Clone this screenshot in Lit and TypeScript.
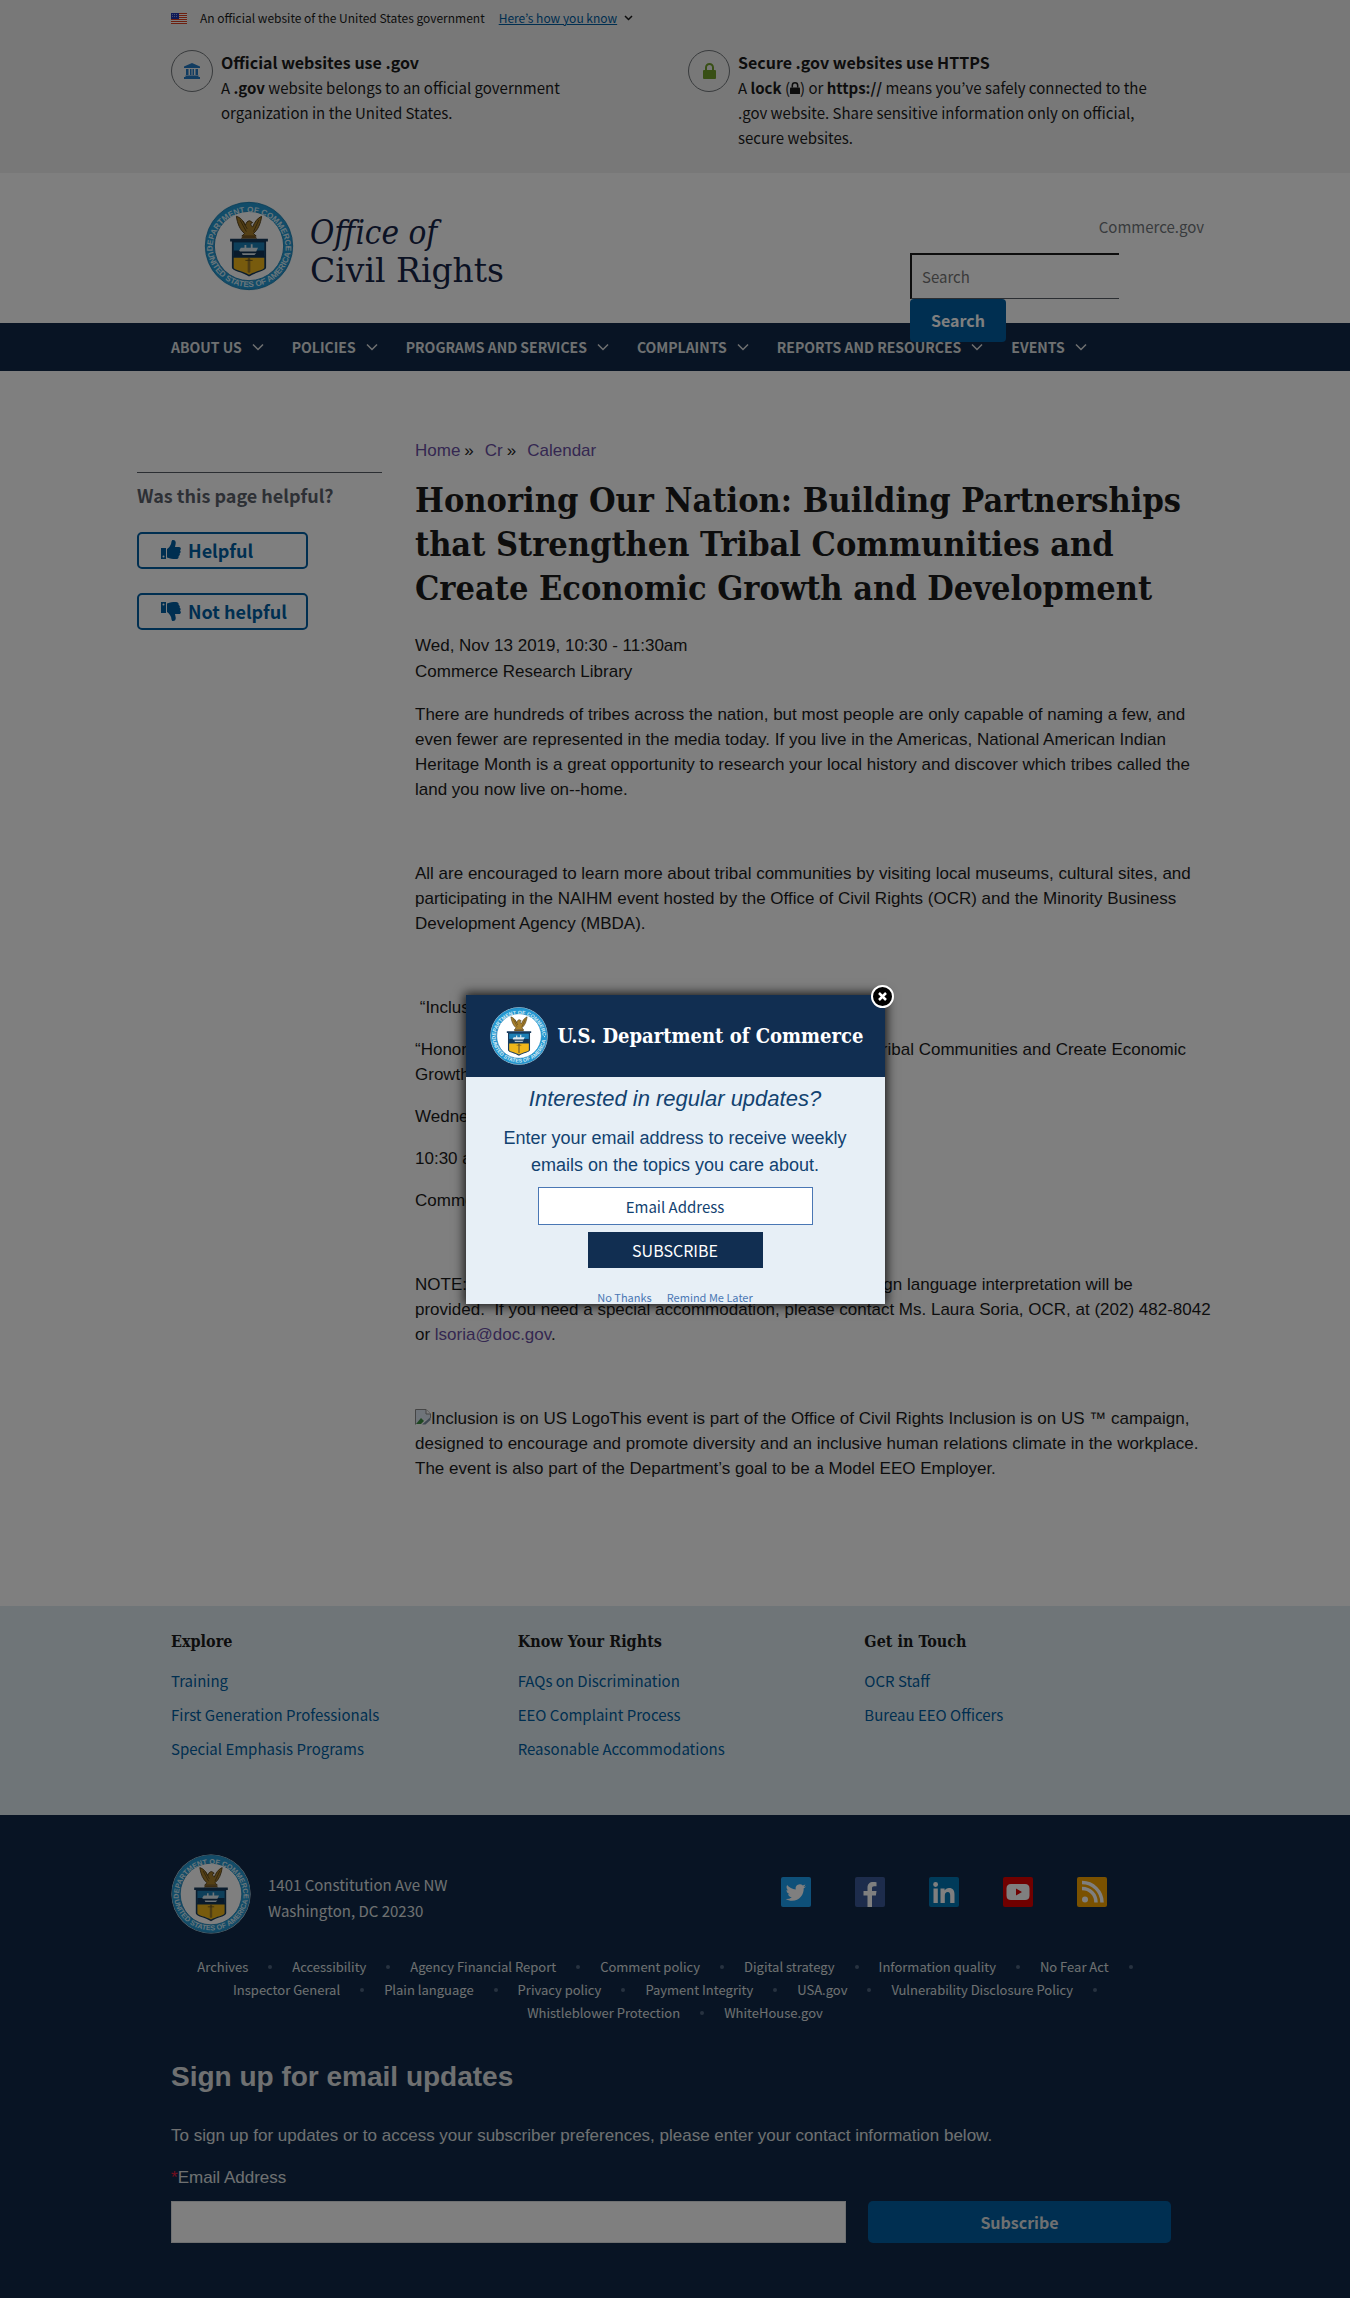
import { LitElement, html, css, svg } from "lit";
import { customElement } from "lit/decorators.js";

const base = css`
  *,
  *::before,
  *::after {
    box-sizing: border-box;
  }
  :host {
    --sans: "Noto Sans CJK KR", "Open Sans", sans-serif;
    --serif: "DejaVu Serif Condensed", "DejaVu Serif", "Liberation Serif", serif;
    --arial: "Liberation Sans", Arial, sans-serif;
    --navy: #112949;
    --blue: #005ea2;
  }
  a {
    text-decoration: none;
    color: inherit;
  }
  button,
  input {
    font: inherit;
    margin: 0;
  }
  button {
    border: 0;
    cursor: pointer;
  }
  ul {
    list-style: none;
    margin: 0;
    padding: 0;
  }
  svg {
    display: block;
    flex: none;
  }
`;

@customElement("commerce-seal")
export class CommerceSeal extends LitElement {
  static styles = css`
    :host {
      display: block;
      flex: none;
    }
    svg {
      display: block;
      width: 100%;
      height: auto;
    }
    .lettering {
      font: bold 9px "Liberation Sans", sans-serif;
      fill: #d4ebf5;
    }
  `;

  render() {
    return html`<svg viewBox="0 0 100 100" role="img" aria-label="Department of Commerce seal">
      <defs>
        <path id="top" d="M9.5 53A40.5 40.5 0 1 1 90.5 53" />
        <path id="bottom" d="M3.5 54A46.8 46.8 0 0 0 96.5 54" />
      </defs>
      <circle cx="50" cy="50" r="49.5" fill="#e8f2f6" />
      <circle cx="50" cy="50" r="48.5" fill="#2598d2" stroke="#1b7fb2" stroke-width="1" />
      <circle cx="50" cy="50" r="38.5" fill="#fff" stroke="#1b7fb2" stroke-width="1" />
      <text class="lettering" text-anchor="middle">
        <textPath href="#top" startOffset="50%">DEPARTMENT OF COMMERCE</textPath>
      </text>
      <text class="lettering" text-anchor="middle">
        <textPath href="#bottom" startOffset="50%">UNITED STATES OF AMERICA</textPath>
      </text>
      <path d="M36 17c4 1 8 5 10 10 1-3 2-5 5-5l3 2-2 1c0 2 1 3 2 4 2-5 5-10 10-12-1 8-4 15-9 19l3 3H42l3-3c-5-4-8-11-9-19z" fill="#a9812c" stroke="#4b3715" stroke-width="1" />
      <path d="M40 21l7 13M43 22l5 9M61 21l-6 13" stroke="#5a4317" stroke-width="1" fill="none" />
      <path d="M43 39h14l2 3H41z" fill="#7a5b25" />
      <path d="M29 42h42v3h-2v29c0 4-12 5-19 10-7-5-19-6-19-10V45h-2z" fill="#173a5c" />
      <path d="M33 46h34v15H33z" fill="#1c7fb5" />
      <path d="M33 55h34v7H33z" fill="#123556" />
      <path d="M39 55l2-3h4v-3h2v3h5v-4h2v4h6l-2 4H40zM42 58h16l-2 2H43z" fill="#dfeaf0" />
      <path d="M33 63h34v11c0 3-11 4-17 8-6-4-17-5-17-8z" fill="#f0b71a" />
      <path d="M48.500 64h3v15l-1.500 1-1.500-1z" fill="#9c7a2a" />
      <path d="M50 65v-2M46 66h8" stroke="#6b531d" stroke-width="1" />
      <circle cx="6" cy="51" r="1" fill="#e6f3f8" />
      <circle cx="94" cy="51" r="1" fill="#e6f3f8" />
    </svg>`;
  }
}

@customElement("gov-banner")
export class GovBanner extends LitElement {
  static styles = [
    base,
    css`
      :host {
        display: block;
        background: #f0f0f0;
        color: #1b1b1b;
        font-family: var(--sans);
        font-size: 15px;
        line-height: 25px;
      }
      .inner {
        max-width: 1040px;
        margin: 0 auto;
        padding: 8px 16px 23px;
      }
      .bar {
        display: flex;
        align-items: center;
        font-size: 12px;
        line-height: 20px;
        height: 20px;
      }
      .flag {
        width: 16px;
        margin-right: 13px;
      }
      .how {
        display: flex;
        align-items: center;
        gap: 7px;
        margin-left: 14px;
        padding: 0;
        background: none;
        color: var(--blue);
      }
      .how span {
        text-decoration: underline;
      }
      .tips {
        display: grid;
        grid-template-columns: 1fr 1fr;
        gap: 26px;
        padding-top: 22px;
      }
      .tip {
        display: flex;
        gap: 8px;
        align-items: flex-start;
      }
      .round {
        flex: none;
        width: 42px;
        height: 42px;
        border-radius: 50%;
        border: 1px solid #71767a;
        display: grid;
        place-items: center;
      }
      .tip p {
        margin: 0;
      }
      .lead {
        font-size: 16px;
      }
      .lock {
        display: inline-block;
      }
    `,
  ];

  private lock(color: string, w: number, cls = "") {
    return html`<svg class=${cls} width=${w} viewBox="0 0 13 16" aria-hidden="true">
      <path d="M3 7V4.500a3.500 3.500 0 0 1 7 0V7" fill="none" stroke=${color} stroke-width="2" />
      <rect y="7" width="13" height="9" rx="1" fill=${color} />
    </svg>`;
  }

  render() {
    return html`<div class="inner">
      <div class="bar">
        <svg class="flag" viewBox="0 0 16 11" aria-hidden="true">
          <rect width="16" height="11" fill="#fff" />
          <path d="M0 .5h16M0 2.500h16M0 4.500h16M0 6.500h16M0 8.500h16M0 10.500h16" stroke="#db3e1f" />
          <rect width="8" height="6" fill="#1e33b1" />
          <path d="M1 1.500h6M1 3.500h6" stroke="#8f9ce0" stroke-dasharray="1 1" />
        </svg>
        <span>An official website of the United States government</span>
        <button class="how" type="button">
          <span>Here’s how you know</span>
          <svg width="9" height="6" viewBox="0 0 9 6" aria-hidden="true">
            <path d="M1 1l3.500 3.500L8 1" fill="none" stroke="#1b1b1b" stroke-width="1.500" />
          </svg>
        </button>
      </div>
      <div class="tips">
        <div class="tip">
          <span class="round">
            <svg width="16" height="16" viewBox="0 0 16 16" aria-hidden="true">
              <path d="M8 0l8 3.500V5H0V3.500zM2 6h2.500v6H2zM6 6h1.500v6H6zM8.500 6H10v6H8.500zM11.500 6H14v6h-2.500zM1.500 12.500h13V14H16v2H0v-2h1.500z" fill="#2378c3" />
            </svg>
          </span>
          <p>
            <strong class="lead">Official websites use .gov</strong><br />A
            <strong>.gov</strong> website belongs to an official government<br />organization in the
            United States.
          </p>
        </div>
        <div class="tip">
          <span class="round">${this.lock("#719f2a", 13)}</span>
          <p>
            <strong class="lead">Secure .gov websites use HTTPS</strong><br />A
            <strong>lock</strong> (${this.lock("#1b1b1b", 10, "lock")}) or
            <strong>https://</strong> means you’ve safely connected to the<br />.gov website. Share
            sensitive information only on official,<br />secure websites.
          </p>
        </div>
      </div>
    </div>`;
  }
}

@customElement("site-header")
export class SiteHeader extends LitElement {
  static styles = [
    base,
    css`
      :host {
        display: block;
        font-family: var(--sans);
      }
      .inner {
        max-width: 1076px;
        margin: 0 auto;
        padding: 28px 9px 32px 67px;
        display: flex;
        justify-content: space-between;
        align-items: flex-start;
      }
      .brand {
        display: flex;
        gap: 16px;
        align-items: center;
        font-family: "DejaVu Serif", serif;
        font-size: 33px;
        line-height: 38px;
        color: #162447;
      }
      .brand span {
        padding-top: 12px;
      }
      .brand em {
        font-family: var(--serif);
      }
      .brand commerce-seal {
        width: 90px;
      }
      .aux {
        width: 294px;
        margin: 14px 0 -52px;
        position: relative;
        z-index: 1;
      }
      .parent {
        display: block;
        text-align: right;
        font-size: 15px;
        line-height: 24px;
        color: #71767a;
      }
      .search {
        margin-top: 14px;
        display: flex;
        flex-direction: column;
        align-items: flex-start;
      }
      .search input {
        width: 209px;
        height: 46px;
        border: 2px solid #1b1b1b;
        border-bottom: 1px solid #565c65;
        border-right: 0;
        border-radius: 0;
        background: #fff;
        padding: 0 10px;
        font-size: 15px;
      }
      .search input::placeholder {
        color: #757575;
        opacity: 1;
      }
      .search button {
        padding: 0 21px 2px;
        height: 43px;
        border-radius: 4px;
        background: var(--blue);
        color: #fff;
        font-size: 16px;
        font-weight: 700;
      }
      .bar {
        background: var(--navy);
      }
      .menu {
        max-width: 1040px;
        margin: 0 auto;
        padding: 0 16px;
        display: flex;
        gap: 28px;
        height: 48px;
        align-items: center;
      }
      .menu button {
        display: flex;
        align-items: center;
        gap: 10px;
        padding: 0;
        background: none;
        color: #dfe1e2;
        font-size: 14px;
        line-height: 24px;
        font-weight: 700;
        white-space: nowrap;
      }
    `,
  ];

  private items = [
    "ABOUT US",
    "POLICIES",
    "PROGRAMS AND SERVICES",
    "COMPLAINTS",
    "REPORTS AND RESOURCES",
    "EVENTS",
  ];

  render() {
    return html`<header>
      <div class="inner">
        <a class="brand" href="#">
          <commerce-seal></commerce-seal>
          <span><em>Office of</em><br />Civil Rights</span>
        </a>
        <div class="aux">
          <a class="parent" href="#">Commerce.gov</a>
          <form class="search" role="search" @submit=${(e: Event) => e.preventDefault()}>
            <input type="search" placeholder="Search" aria-label="Search" />
            <button>Search</button>
          </form>
        </div>
      </div>
      <nav class="bar" aria-label="Primary">
        <ul class="menu">
          ${this.items.map(
            (t) => html`<li>
              <button type="button">
                ${t}
                <svg width="12" height="8" viewBox="0 0 12 8" aria-hidden="true">
                  <path d="M1 1.500l5 5 5-5" fill="none" stroke="#dfe1e2" stroke-width="1.500" />
                </svg>
              </button>
            </li>`
          )}
        </ul>
      </nav>
    </header>`;
  }
}

@customElement("feedback-panel")
export class FeedbackPanel extends LitElement {
  static styles = [
    base,
    css`
      :host {
        display: block;
        font-family: var(--sans);
        border-top: 1px solid #565c65;
      }
      h2 {
        margin: 7px 0 22px;
        font-size: 18px;
        line-height: 30px;
        font-weight: 700;
        color: #5b616b;
      }
      button {
        display: flex;
        align-items: center;
        gap: 7px;
        width: 171px;
        height: 37px;
        margin-bottom: 24px;
        padding: 0 0 2px 22px;
        border: 2px solid var(--blue);
        border-radius: 5px;
        background: #fff;
        color: var(--blue);
        font-size: 18px;
        line-height: 28px;
        font-weight: 700;
        white-space: nowrap;
      }
      .down {
        transform: scaleY(-1);
      }
    `,
  ];

  private thumb(cls = "") {
    return html`<svg class=${cls} width="20" height="20" viewBox="0 0 20 20" aria-hidden="true">
      <path d="M0 8h5v11H0z" fill="#005ea2" />
      <circle cx="2.500" cy="16.500" r="1" fill="#fff" />
      <path d="M6 9c2-1 3-3 4-5 .6-1.400.2-4 2-4 2.500 0 3 2 2.600 4L14 7h4c2 0 2.500 2.500 1 3.300 1 .9.800 2.600-.4 3 .6 1.200 0 2.400-1 2.700.3 1.800-.5 3-2.600 3-4 0-5.500-.4-9-1.500z" fill="#005ea2" />
    </svg>`;
  }

  render() {
    return html`<h2>Was this page helpful?</h2>
      <button type="button">${this.thumb()}Helpful</button>
      <button type="button">${this.thumb("down")}Not helpful</button>`;
  }
}

@customElement("event-article")
export class EventArticle extends LitElement {
  static styles = [
    base,
    css`
      :host {
        display: block;
        font-family: var(--arial);
        font-size: 17px;
        line-height: 25px;
        color: #1b1b1b;
      }
      a {
        color: #6a4fa3;
      }
      .crumbs {
        display: flex;
        gap: 11px;
      }
      .crumbs li {
        display: flex;
        gap: 4px;
      }
      h1 {
        margin: 15px 0 23px;
        font-family: var(--serif);
        font-size: 34px;
        line-height: 44px;
        font-weight: 700;
      }
      .meta {
        line-height: 26px;
      }
      p {
        margin: 17px 0;
        min-height: 25px;
      }
      .broken {
        display: inline-block;
        vertical-align: -1px;
        height: 16px;
        width: 16px;
      }
    `,
  ];

  render() {
    return html`<article>
      <nav aria-label="Breadcrumb">
        <ul class="crumbs">
          <li><a href="#">Home</a><span>»</span></li>
          <li><a href="#">Cr</a><span>»</span></li>
          <li><a href="#">Calendar</a></li>
        </ul>
      </nav>
      <h1>
        Honoring Our Nation: Building Partnerships<br />that Strengthen Tribal Communities and<br />Create
        Economic Growth and Development
      </h1>
      <div class="meta">Wed, Nov 13 2019, 10:30 - 11:30am<br />Commerce Research Library</div>
      <p>
        There are hundreds of tribes across the nation, but most people are only capable of naming a
        few, and even fewer are represented in the media today. If you live in the Americas, National
        American Indian Heritage Month is a great opportunity to research your local history and
        discover which tribes called the land you now live on--home.
      </p>
      <p></p>
      <p>
        All are encouraged to learn more about tribal communities by visiting local museums, cultural
        sites, and participating in the NAIHM event hosted by the Office of Civil Rights (OCR) and the
        Minority Business Development Agency (MBDA).
      </p>
      <p></p>
      <p>&nbsp;“Inclusion is on US”</p>
      <p>
        “Honoring Our Nation: Building Partnerships that Strengthen Tribal Communities and Create
        Economic Growth and Development”
      </p>
      <p>Wednesday, November 13, 2019</p>
      <p>10:30 am - 11:30 am</p>
      <p>Commerce Research Library</p>
      <p></p>
      <p>
        NOTE: This event is accessible for persons with disabilities. Sign language interpretation will
        be<br />provided.&nbsp; If you need a special accommodation, please contact Ms. Laura Soria,
        OCR, at (202) 482-8042 or <a href="#">lsoria@doc.gov</a>.
      </p>
      <p></p>
      <p>
        <svg class="broken" viewBox="0 0 16 16" aria-hidden="true">
          <path d="M.5 15.500V.5H11l4.500 4.500v4" fill="#dfe8f4" stroke="#8b8b8b" />
          <path d="M11 .5V5h4.500" fill="#fff" stroke="#8b8b8b" />
          <path d="M1 15l5-6 3 3-3 3z" fill="#3f8f45" />
          <path d="M7 15.500l8.500-7.500v3l-5 4.500z" fill="#7d8ea5" />
        </svg>Inclusion is on US LogoThis event is part of the Office of Civil Rights Inclusion is on US
        ™ campaign, designed to encourage and promote diversity and an inclusive human relations
        climate in the workplace. The event is also part of the Department’s goal to be a Model EEO
        Employer.
      </p>
    </article>`;
  }
}

@customElement("site-footer")
export class SiteFooter extends LitElement {
  static styles = [
    base,
    css`
      :host {
        display: block;
        font-family: var(--sans);
      }
      .inner {
        max-width: 1040px;
        margin: 0 auto;
        padding: 0 16px;
      }
      .upper {
        background: #dfebf0;
        padding: 21px 0 49px;
      }
      .cols {
        display: grid;
        grid-template-columns: repeat(3, 1fr);
        gap: 32px;
      }
      h3 {
        margin: 0 0 7px;
        font-family: var(--serif);
        font-size: 16px;
        line-height: 30px;
        color: #1b1b1b;
      }
      .cols a {
        font-size: 15px;
        line-height: 34px;
        color: var(--blue);
      }
      .lower {
        background: var(--navy);
        color: #dfe1e2;
        padding: 39px 0 56px;
      }
      .contact {
        display: flex;
        align-items: center;
      }
      .contact commerce-seal {
        width: 80px;
      }
      address {
        margin-left: 17px;
        padding-top: 8px;
        font-style: normal;
        font-size: 15px;
        line-height: 26px;
      }
      .social {
        display: flex;
        gap: 44px;
        margin: -4px 72px 0 auto;
      }
      .links {
        display: flex;
        flex-wrap: wrap;
        justify-content: center;
        margin-top: 21px;
        font-size: 13px;
        line-height: 23px;
      }
      .links li {
        display: flex;
        align-items: center;
      }
      .links li:not(:last-child)::after {
        content: "";
        width: 4px;
        height: 4px;
        border-radius: 50%;
        margin: 0 20px;
        background: #4f6580;
      }
      .signup {
        font-family: var(--arial);
        font-size: 17px;
        line-height: 26px;
      }
      .signup h2 {
        margin: 36px 0 0;
        font-size: 28px;
        line-height: 34px;
      }
      .signup p {
        margin: 29px 0 16px;
      }
      .signup label {
        display: block;
        margin-bottom: 10px;
      }
      .req {
        color: #e31c3d;
      }
      .row {
        display: flex;
        gap: 22px;
        padding-right: 8px;
        align-items: flex-end;
      }
      .row input {
        flex: 1;
        min-width: 0;
        height: 42px;
        border: 1px solid #dfe1e2;
        background: #fff;
        border-radius: 0;
      }
      .row button {
        width: 303px;
        height: 42px;
        border-radius: 5px;
        background: var(--blue);
        color: #dfe1e2;
        font-family: var(--sans);
        font-size: 16px;
        font-weight: 700;
      }
    `,
  ];

  private columns: [string, string[]][] = [
    ["Explore", ["Training", "First Generation Professionals", "Special Emphasis Programs"]],
    ["Know Your Rights", ["FAQs on Discrimination", "EEO Complaint Process", "Reasonable Accommodations"]],
    ["Get in Touch", ["OCR Staff", "Bureau EEO Officers"]],
  ];

  private policies = [
    "Archives",
    "Accessibility",
    "Agency Financial Report",
    "Comment policy",
    "Digital strategy",
    "Information quality",
    "No Fear Act",
    "Inspector General",
    "Plain language",
    "Privacy policy",
    "Payment Integrity",
    "USA.gov",
    "Vulnerability Disclosure Policy",
    "Whistleblower Protection",
    "WhiteHouse.gov",
  ];

  private social = [
    {
      name: "Twitter",
      color: "#1da1f2",
      glyph: svg`<path d="M25 9.200c-.7.300-1.500.6-2.400.7.900-.5 1.500-1.300 1.800-2.300-.8.500-1.700.8-2.600 1a4.200 4.200 0 0 0-7.100 3.800c-3.500-.2-6.500-1.800-8.600-4.400-1.100 2-.6 4.300 1.300 5.600-.7 0-1.300-.2-1.900-.5 0 2 1.400 3.700 3.300 4.100-.6.200-1.200.2-1.900.1.500 1.600 2 2.800 3.900 2.900A8.400 8.400 0 0 1 4.700 22c1.900 1.200 4 1.800 6.300 1.800 7.600 0 12-6.400 11.700-12.500.9-.6 1.700-1.300 2.300-2.100z"/>`,
    },
    {
      name: "Facebook",
      color: "#3b5998",
      glyph: svg`<path d="M12.500 30V18.500H8.500V14h4v-3.200C12.500 7 14.700 5 18.200 5c1.600 0 2.800.1 3.300.2v4h-2.300c-1.800 0-2.200.9-2.200 2.100V14h4.500l-.6 4.500H17V30z"/>`,
    },
    {
      name: "LinkedIn",
      color: "#0077b5",
      glyph: svg`<path d="M4.500 11.500h4.300V26H4.500zM6.600 5a2.400 2.400 0 1 1 0 4.900 2.400 2.400 0 0 1 0-4.900zM11.500 11.500h4.100v2c.9-1.500 2.400-2.400 4.400-2.400 4 0 5.500 2.500 5.500 6.500V26h-4.300v-7.600c0-2-.6-3.300-2.400-3.300-2 0-3 1.400-3 3.400V26h-4.300z"/>`,
    },
    {
      name: "YouTube",
      color: "#e00000",
      glyph: svg`<path fill-rule="evenodd" d="M8 7h14c3 0 4.500 1.500 4.500 4.500v7c0 3-1.500 4.500-4.500 4.500H8c-3 0-4.500-1.500-4.500-4.500v-7C3.500 8.500 5 7 8 7zm5 4.500v7l6-3.500z"/>`,
    },
    {
      name: "RSS",
      color: "#f5a300",
      glyph: svg`<circle cx="8" cy="22.500" r="3"/><path d="M5 11.500c8 0 14 6 14 14M5 5.500c11 0 20 9 20 20" fill="none" stroke="#fff" stroke-width="3.500"/>`,
    },
  ];

  render() {
    return html`<footer>
      <div class="upper">
        <div class="inner cols">
          ${this.columns.map(
            ([title, links]) => html`<section>
              <h3>${title}</h3>
              <ul>
                ${links.map((l) => html`<li><a href="#">${l}</a></li>`)}
              </ul>
            </section>`
          )}
        </div>
      </div>
      <div class="lower">
        <div class="inner">
          <div class="contact">
            <commerce-seal></commerce-seal>
            <address>1401 Constitution Ave NW<br />Washington, DC 20230</address>
            <div class="social">
              ${this.social.map(
                (s) => html`<a href="#" aria-label=${s.name}>
                  <svg width="30" height="30" viewBox="0 0 30 30" fill="#fff" aria-hidden="true">
                    <rect width="30" height="30" rx="2" fill=${s.color} />
                    ${s.glyph}
                  </svg>
                </a>`
              )}
            </div>
          </div>
          <ul class="links">
            ${this.policies.map((p) => html`<li><a href="#">${p}</a></li>`)}
          </ul>
          <form class="signup" @submit=${(e: Event) => e.preventDefault()}>
            <h2>Sign up for email updates</h2>
            <p>
              To sign up for updates or to access your subscriber preferences, please enter your
              contact information below.
            </p>
            <label for="signup-email"><span class="req">*</span>Email Address</label>
            <div class="row">
              <input id="signup-email" type="email" />
              <button>Subscribe</button>
            </div>
          </form>
        </div>
      </div>
    </footer>`;
  }
}

@customElement("subscribe-dialog")
export class SubscribeDialog extends LitElement {
  static styles = [
    base,
    css`
      :host {
        position: absolute;
        inset: 0;
        z-index: 10;
        display: flex;
        align-items: center;
        justify-content: center;
        background: rgba(0, 0, 0, 0.5);
      }
      .box {
        position: relative;
        width: 419px;
        box-shadow: 0 0 10px 2px rgba(0, 0, 0, 0.8);
      }
      .body {
        background: #e7eff6;
        color: #124270;
        text-align: center;
        font-family: var(--arial);
        font-size: 18px;
        line-height: 27px;
      }
      .title {
        display: flex;
        align-items: center;
        gap: 10px;
        height: 82px;
        padding-left: 24px;
        background: #112e51;
        color: #fff;
        font-family: var(--serif);
        font-size: 20px;
        font-weight: 700;
        white-space: nowrap;
      }
      .title commerce-seal {
        width: 58px;
      }
      h2 {
        margin: 0;
        padding: 8px 0 12px;
        font-size: 22px;
        line-height: 28px;
        font-weight: 400;
        font-style: italic;
      }
      p {
        margin: 0 30px 8px;
      }
      form {
        display: flex;
        flex-direction: column;
        align-items: center;
        gap: 7px;
        font-family: var(--sans);
      }
      input {
        width: 275px;
        height: 38px;
        border: 1px solid #4a77b4;
        border-radius: 0;
        background: #fff;
        text-align: center;
        font-size: 15px;
      }
      input::placeholder {
        color: #124270;
        opacity: 1;
      }
      .send {
        width: 175px;
        height: 36px;
        background: #112e51;
        color: #fff;
        font-size: 16px;
      }
      .options {
        display: flex;
        justify-content: center;
        gap: 15px;
        padding-top: 22px;
        font-family: var(--sans);
        font-size: 11px;
        line-height: 14px;
        color: #4a77b4;
      }
      .close {
        position: absolute;
        top: -10px;
        right: -9px;
        width: 23px;
        height: 23px;
        padding: 0;
        background: none;
      }
    `,
  ];

  render() {
    return html`<div class="box" role="dialog" aria-label="Email updates">
      <div class="title"><commerce-seal></commerce-seal>U.S. Department of Commerce</div>
      <div class="body">
        <h2>Interested in regular updates?</h2>
        <p>Enter your email address to receive weekly emails on the topics you care about.</p>
        <form @submit=${(e: Event) => e.preventDefault()}>
          <input type="email" placeholder="Email Address" aria-label="Email Address" />
          <button class="send">SUBSCRIBE</button>
        </form>
        <div class="options"><a href="#">No Thanks</a><a href="#">Remind Me Later</a></div>
      </div>
      <button class="close" type="button" aria-label="Close">
        <svg width="23" height="23" viewBox="0 0 23 23">
          <circle cx="11.500" cy="11.500" r="10.500" fill="#000" stroke="#fff" stroke-width="2" />
          <path d="M8 8l7 7M15 8l-7 7" stroke="#fff" stroke-width="2.500" />
        </svg>
      </button>
    </div>`;
  }
}

@customElement("app-root")
export class AppRoot extends LitElement {
  static styles = [
    base,
    css`
      :host {
        display: block;
        position: relative;
        background: #fff;
      }
      main {
        max-width: 1076px;
        margin: 0 auto;
        padding: 67px 0 108px;
        display: grid;
        grid-template-columns: 245px 1fr;
        gap: 33px;
        align-items: start;
      }
      feedback-panel {
        margin-top: 34px;
      }
    `,
  ];

  render() {
    return html`<gov-banner></gov-banner>
      <site-header></site-header>
      <main>
        <feedback-panel></feedback-panel>
        <event-article></event-article>
      </main>
      <site-footer></site-footer>
      <subscribe-dialog></subscribe-dialog>`;
  }
}
